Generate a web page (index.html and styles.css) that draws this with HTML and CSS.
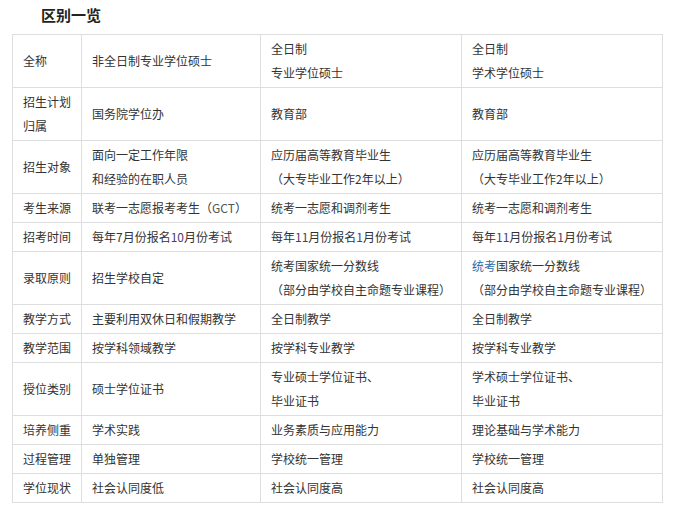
FILE: index.html
```html
<!DOCTYPE html>
<html lang="zh">
<head>
<meta charset="utf-8">
<title>区别一览</title>
<link rel="stylesheet" href="styles.css">
</head>
<body>
<div class="page">
  <h2 class="title">区别一览</h2>
  <table class="cmp">
    <colgroup>
      <col class="c1"><col class="c2"><col class="c3"><col class="c4">
    </colgroup>
    <tbody>
      <tr><td>全称</td><td>非全日制专业学位硕士</td><td>全日制<br>专业学位硕士</td><td>全日制<br>学术学位硕士</td></tr>
      <tr><td>招生计划<br>归属</td><td>国务院学位办</td><td>教育部</td><td>教育部</td></tr>
      <tr><td>招生对象</td><td>面向一定工作年限<br>和经验的在职人员</td><td>应历届高等教育毕业生<br>（大专毕业工作2年以上）</td><td>应历届高等教育毕业生<br>（大专毕业工作2年以上）</td></tr>
      <tr><td>考生来源</td><td>联考一志愿报考考生（<span class="gray">GCT</span>）</td><td>统考一志愿和调剂考生</td><td>统考一志愿和调剂考生</td></tr>
      <tr><td>招考时间</td><td>每年7月份报名<span class="num">10</span>月份考试</td><td>每年<span class="num">11</span>月份报名<span class="num">1</span>月份考试</td><td>每年<span class="num">11</span>月份报名<span class="num">1</span>月份考试</td></tr>
      <tr><td>录取原则</td><td>招生学校自定</td><td>统考国家统一分数线<br>（部分由学校自主命题专业课程）</td><td><span class="link">统考</span>国家统一分数线<br>（部分由学校自主命题专业课程）</td></tr>
      <tr><td>教学方式</td><td>主要利用双休日和假期教学</td><td>全日制教学</td><td>全日制教学</td></tr>
      <tr><td>教学范围</td><td>按学科领域教学</td><td>按学科专业教学</td><td>按学科专业教学</td></tr>
      <tr><td>授位类别</td><td>硕士学位证书</td><td>专业硕士学位证书、<br>毕业证书</td><td>学术硕士学位证书、<br>毕业证书</td></tr>
      <tr><td>培养侧重</td><td>学术实践</td><td>业务素质与应用能力</td><td>理论基础与学术能力</td></tr>
      <tr><td>过程管理</td><td>单独管理</td><td>学校统一管理</td><td>学校统一管理</td></tr>
      <tr><td>学位现状</td><td>社会认同度低</td><td>社会认同度高</td><td>社会认同度高</td></tr>
    </tbody>
  </table>
</div>
</body>
</html>
```

FILE: styles.css
```css
html, body {
  margin: 0;
  padding: 0;
  background: #ffffff;
}
body {
  font-family: "Noto Sans CJK SC", "Liberation Sans", sans-serif;
  font-size: 12px;
  color: #333333;
}
.page {
  padding: 5px 0 0 12px;
}
.title {
  margin: 0 0 9px 29px;
  font-size: 15px;
  line-height: 20px;
  font-weight: bold;
  color: #222222;
}
.cmp {
  border-collapse: collapse;
  table-layout: fixed;
  width: 650px;
}
.c1 { width: 69px; }
.c2 { width: 179px; }
.c3 { width: 201px; }
.c4 { width: 201px; }
.cmp td {
  border: 1px solid #dedede;
  padding: 2px 9px 2px 10px;
  line-height: 24px;
  vertical-align: middle;
  text-align: left;
  white-space: nowrap;
}
.gray { color: #555555; }
.num { color: #4a3d6e; }
.link { color: #2a6ab0; }
```
